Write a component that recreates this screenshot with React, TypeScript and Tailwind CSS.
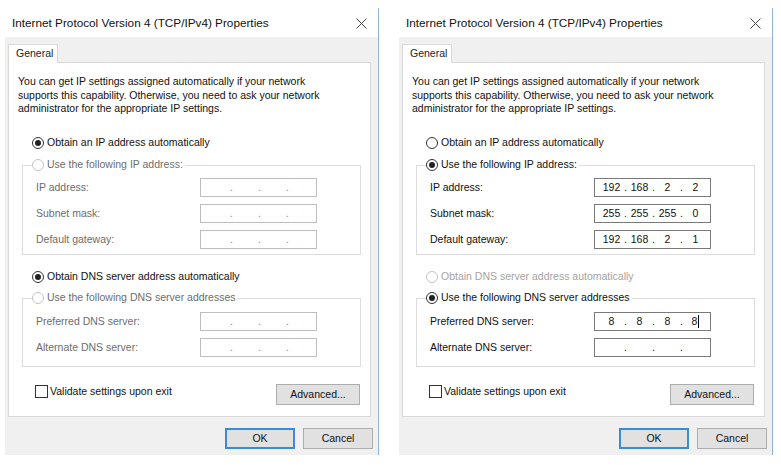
import React from "react";

type Mode = "auto" | "manual";

function Radio({ checked, disabled }: { checked?: boolean; disabled?: boolean }) {
  return (
    <span
      className={
        disabled
          ? "w-[12px] h-[12px] rounded-full border border-[#c4c4c4] bg-white flex items-center justify-center shrink-0"
          : "w-[12px] h-[12px] rounded-full border border-[#333333] bg-white flex items-center justify-center shrink-0"
      }
    >
      {checked && <span className="w-[6px] h-[6px] rounded-full bg-[#222222]" />}
    </span>
  );
}

function IpBox({ parts, disabled, cursor }: { parts: string[]; disabled?: boolean; cursor?: boolean }) {
  const seg = (t: string, last?: boolean) => (
    <span className="w-[25px] flex justify-center items-center relative">
      {t}
      {last && cursor && <span className="w-[1px] h-[13px] bg-black ml-[1px]" />}
    </span>
  );
  const dot = <span className="w-[3px] flex justify-center">.</span>;
  return (
    <div
      className={
        disabled
          ? "w-[117px] h-[19px] border border-[#bdbdbd] bg-white flex items-center pl-[4px] text-[#8a8a8a]"
          : "w-[117px] h-[19px] border border-[#7a7a7a] bg-white flex items-center pl-[4px] text-[#111111]"
      }
    >
      {seg(parts[0])}
      {dot}
      {seg(parts[1])}
      {dot}
      {seg(parts[2])}
      {dot}
      {seg(parts[3], true)}
    </div>
  );
}

function Row({ label, parts, disabled, cursor }: { label: string; parts: string[]; disabled?: boolean; cursor?: boolean }) {
  return (
    <div className="flex items-center h-[19px]">
      <span className={disabled ? "w-[164px] text-[#6d6d6d]" : "w-[164px] text-[#111111]"}>{label}</span>
      <IpBox parts={parts} disabled={disabled} cursor={cursor} />
    </div>
  );
}

function Dialog({ mode }: { mode: Mode }) {
  const manual = mode === "manual";
  const empty = ["", "", "", ""];
  return (
    <div className="w-[374px] h-[447px] flex flex-col border-r border-[#8fb2dd]">
      <div className="h-[29px] bg-white flex items-center justify-between pl-[7px] pr-[11px]">
        <span className="font-['Liberation_Sans',Arial,sans-serif] text-[11.75px] text-[#111111] mt-[1px]">
          Internet Protocol Version 4 (TCP/IPv4) Properties
        </span>
        <svg width="11" height="11" viewBox="0 0 11 11" className="mt-[1px]">
          <path d="M0.5 0.5 L10.5 10.5 M10.5 0.5 L0.5 10.5" stroke="#444" strokeWidth="1" fill="none" />
        </svg>
      </div>
      <div className="flex-1 bg-[#f0f0f0] flex flex-col pl-[3px] pr-[7px] pt-[7px]">
        <div className="w-[50px] h-[19px] bg-white border border-b-0 border-[#d9d9d9] -mb-px relative z-10 flex items-center pl-[7px] text-[10.5px] text-[#222222]">
          General
        </div>
        <div className="h-[355px] bg-white border border-[#d9d9d9] flex flex-col text-[10.5px] text-[#111111]">
          <div className="mt-[12px] ml-[9px] h-[41px] leading-[13.5px]">
            You can get IP settings assigned automatically if your network
            <br />
            supports this capability. Otherwise, you need to ask your network
            <br />
            administrator for the appropriate IP settings.
          </div>
          <div className="mt-[19px] ml-[23px] h-[16px] flex items-center gap-[3px]">
            <Radio checked={!manual} />
            <span>Obtain an IP address automatically</span>
          </div>
          <fieldset className="mt-[6px] ml-[13px] w-[339px] border border-[#dcdcdc] px-0 pb-[5px]">
            <legend className="ml-[9px] pr-[2px] h-[16px] flex items-center gap-[3px]">
              <Radio checked={manual} disabled={!manual} />
              <span className={manual ? "text-[#111111]" : "text-[#6d6d6d]"}>Use the following IP address:</span>
            </legend>
            <div className="pt-[5px] pl-[13px] flex flex-col gap-[7px]">
              <Row label="IP address:" parts={manual ? ["192", "168", "2", "2"] : empty} disabled={!manual} />
              <Row label="Subnet mask:" parts={manual ? ["255", "255", "255", "0"] : empty} disabled={!manual} />
              <Row label="Default gateway:" parts={manual ? ["192", "168", "2", "1"] : empty} disabled={!manual} />
            </div>
          </fieldset>
          <div className="mt-[14px] ml-[23px] h-[16px] flex items-center gap-[3px]">
            <Radio checked={!manual} disabled={manual} />
            <span className={manual ? "text-[#a3a3a3]" : "text-[#111111]"}>Obtain DNS server address automatically</span>
          </div>
          <fieldset className="mt-[5px] ml-[13px] w-[339px] border border-[#dcdcdc] px-0 pb-[9px]">
            <legend className="ml-[9px] pr-[2px] h-[16px] flex items-center gap-[3px]">
              <Radio checked={manual} disabled={!manual} />
              <span className={manual ? "text-[#111111]" : "text-[#6d6d6d]"}>Use the following DNS server addresses</span>
            </legend>
            <div className="pt-[6px] pl-[13px] flex flex-col gap-[7px]">
              <Row label="Preferred DNS server:" parts={manual ? ["8", "8", "8", "8"] : empty} disabled={!manual} cursor={manual} />
              <Row label="Alternate DNS server:" parts={empty} disabled={!manual} />
            </div>
          </fieldset>
          <div className="mt-[17px] flex justify-between items-start pl-[26px] pr-[10px]">
            <div className="mt-[1px] h-[13px] flex items-center gap-[2px]">
              <span className="w-[13px] h-[13px] border border-[#333333] bg-white" />
              <span>Validate settings upon exit</span>
            </div>
            <div className="w-[84px] h-[21px] bg-[#e1e1e1] border border-[#adadad] flex items-center justify-center">
              Advanced...
            </div>
          </div>
        </div>
        <div className="mt-[11px] flex justify-end gap-[8px] mr-[-2px] text-[10.5px] text-[#111111]">
          <div className="w-[70px] h-[21px] bg-[#e1e1e1] border-2 border-[#3c8ad8] flex items-center justify-center">OK</div>
          <div className="w-[70px] h-[21px] bg-[#e1e1e1] border border-[#adadad] flex items-center justify-center">Cancel</div>
        </div>
      </div>
    </div>
  );
}

export default function App() {
  return (
    <div className="w-[781px] h-[465px] bg-white flex pt-[8px] pl-[5px] gap-[20px] font-['Liberation_Sans',Arial,sans-serif]">
      <Dialog mode="auto" />
      <Dialog mode="manual" />
    </div>
  );
}
